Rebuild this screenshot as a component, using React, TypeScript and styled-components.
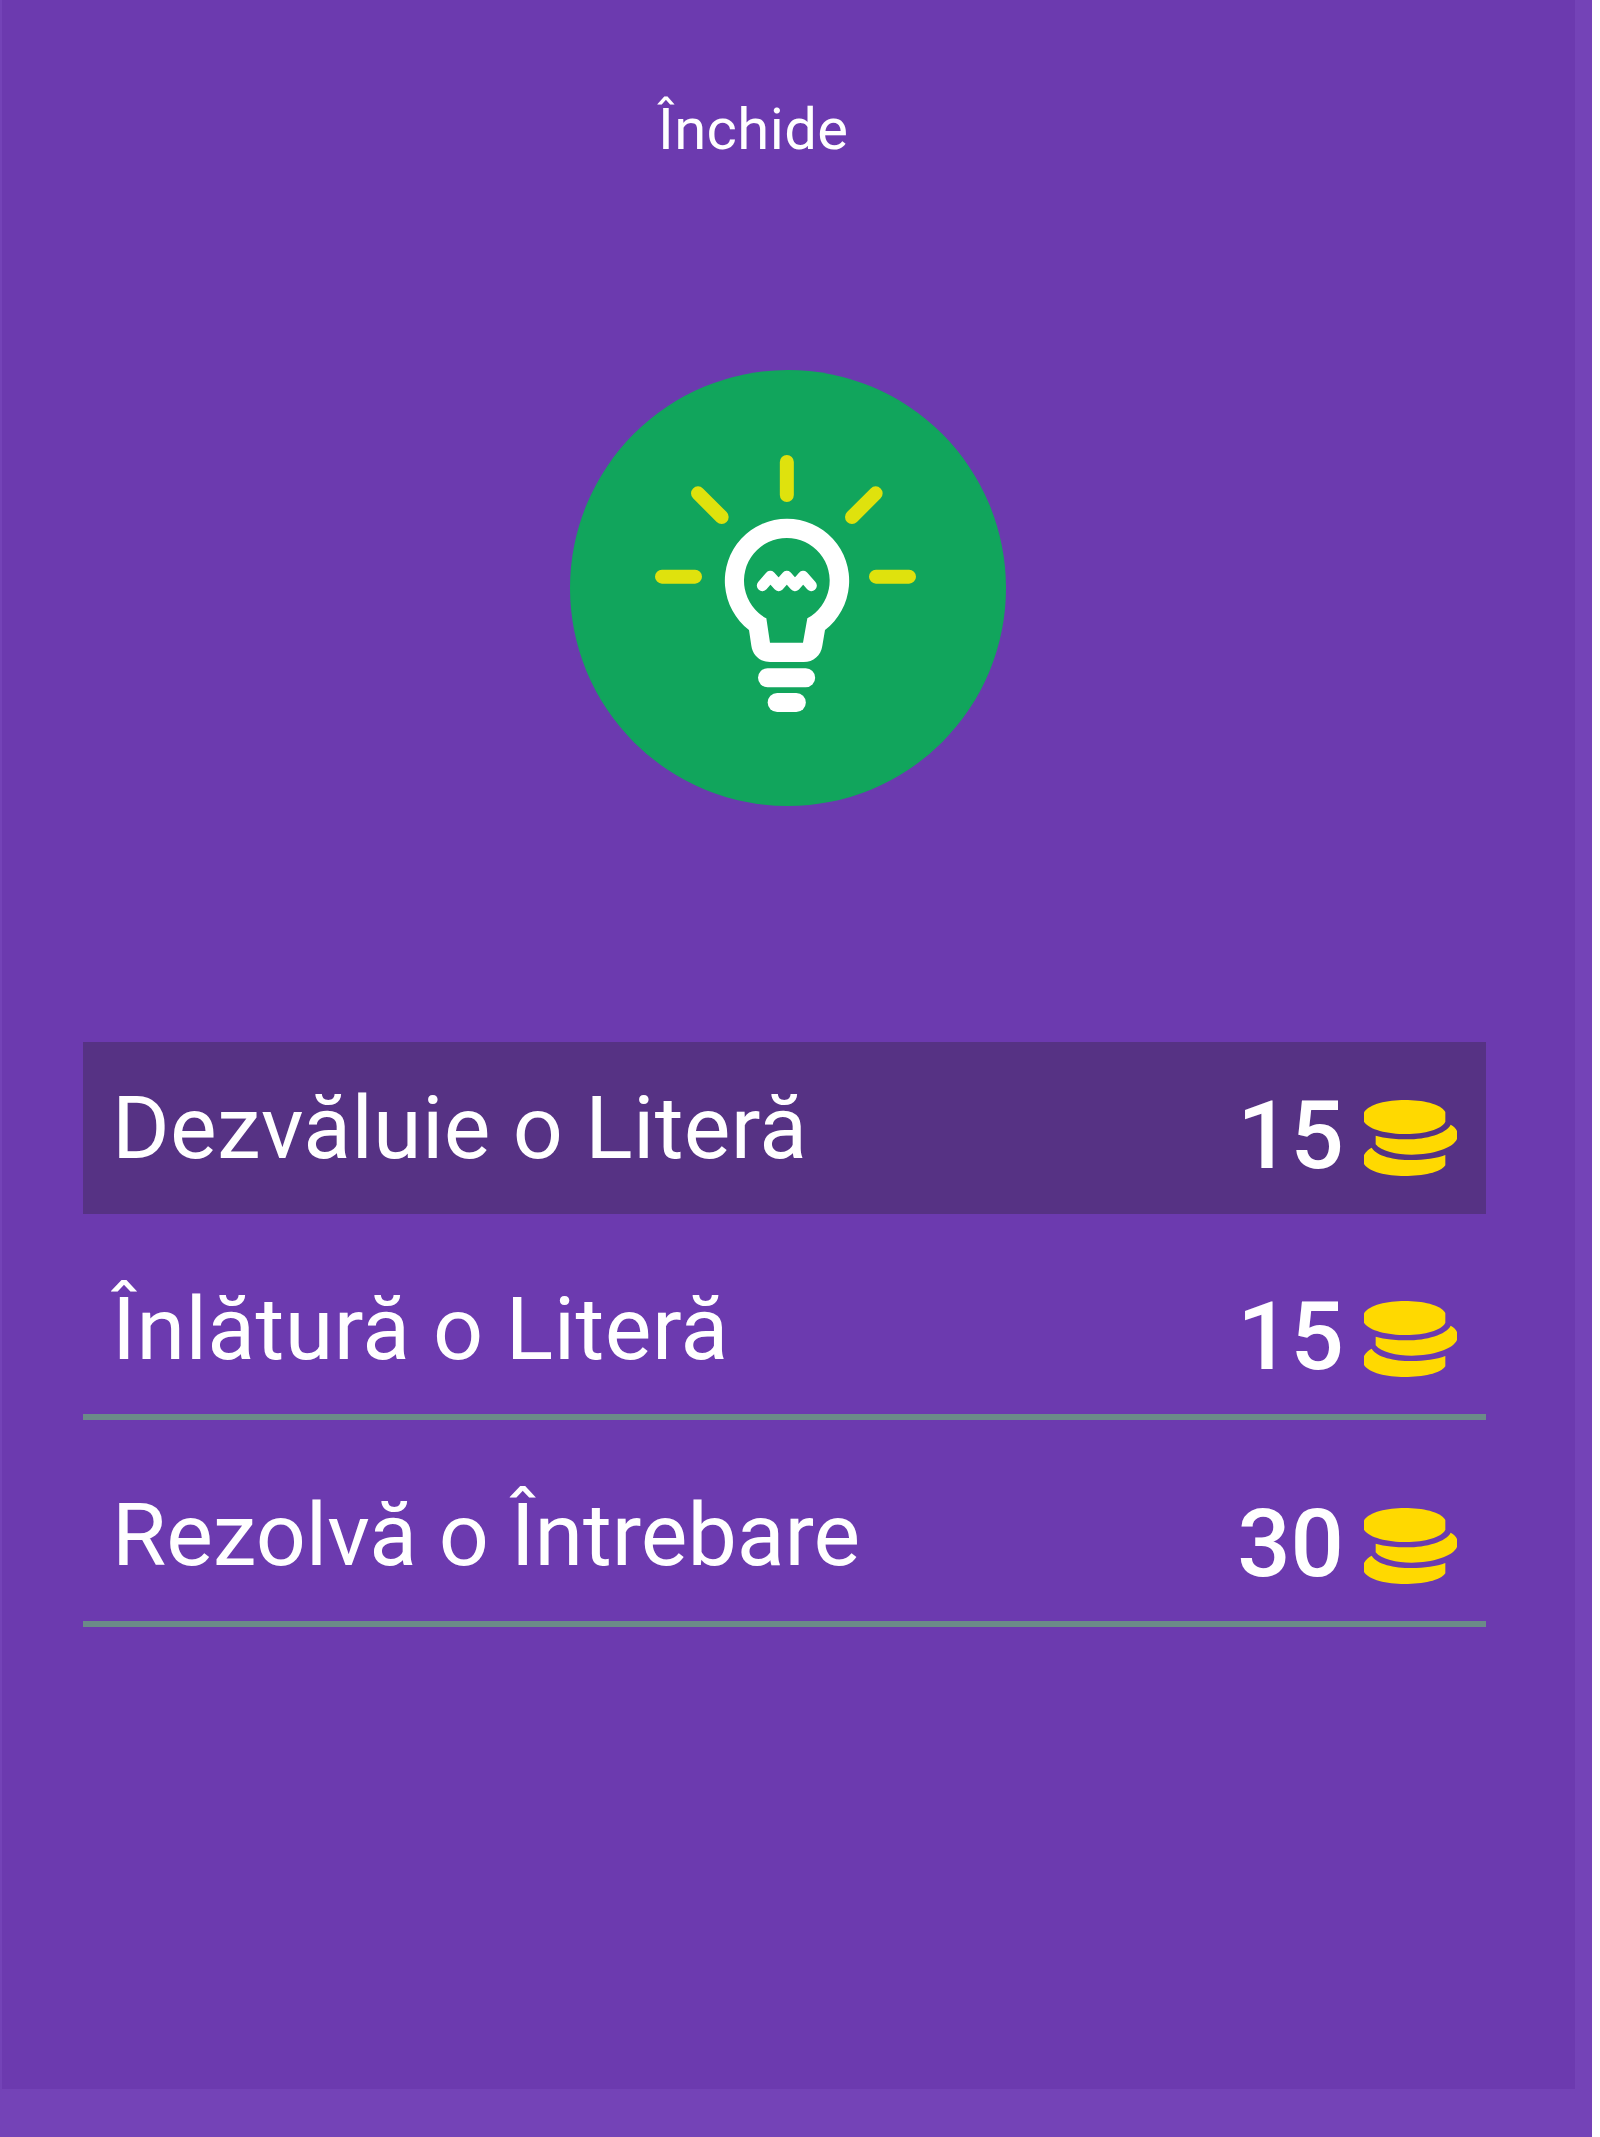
import React from "react";
import styled, { createGlobalStyle } from "styled-components";

const GlobalStyle = createGlobalStyle`
  html, body { margin: 0; padding: 0; background: #ffffff; }
  * { box-sizing: border-box; }
`;

const Page = styled.div`
  width: 1592px;
  height: 2137px;
  padding: 0 17px 48px 2px;
  background: #7443b7;
  font-family: Roboto, "Noto Sans", sans-serif;
  color: #ffffff;
  overflow: hidden;
`;

const Panel = styled.main`
  height: 100%;
  display: flex;
  flex-direction: column;
  align-items: flex-start;
  background: #6c3aaf;
`;

const CloseButton = styled.button`
  margin: 94px 0 0 656px;
  padding: 0;
  border: 0;
  background: none;
  color: inherit;
  font: 400 58px/70px Roboto, "Noto Sans", sans-serif;
  letter-spacing: 0.4px;
  white-space: nowrap;
`;

const Badge = styled.svg`
  display: block;
  width: 436px;
  height: 436px;
  margin: 206px 0 0 568px;
`;

const HintList = styled.ul`
  width: 1403px;
  margin: 236px 0 0 81px;
  padding: 0;
  list-style: none;
  display: flex;
  flex-direction: column;
`;

const Hint = styled.li<{ $active?: boolean }>`
  display: flex;
  justify-content: space-between;
  align-items: flex-start;
  height: ${(p) => (p.$active ? 172 : 177)}px;
  margin-bottom: ${(p) => (p.$active ? 29 : 30)}px;
  padding: 0 29px 0 29px;
  background: ${(p) => (p.$active ? "#563284" : "transparent")};
  border-bottom: ${(p) => (p.$active ? "0" : "6px solid #6b8b88")};
`;

const HintName = styled.span<{ $tracking: number; $top: number }>`
  padding-top: ${(p) => p.$top}px;
  font-size: 88px;
  line-height: 104px;
  letter-spacing: ${(p) => p.$tracking}px;
  white-space: nowrap;
`;

const Price = styled.span`
  display: flex;
  align-items: flex-start;
  gap: 20px;
`;

const Amount = styled.span`
  padding-top: 38px;
  font-size: 94px;
  line-height: 112px;
  font-weight: 500;
`;

const CoinIcon = styled.svg`
  display: block;
  width: 93px;
  height: 76px;
  margin-top: 58px;
`;

const Coins = () => (
  <CoinIcon viewBox="432 210 279 228" fill="#ffd900">
    <path d="M432 247C447 222 502 210 554 210C607 210 661 221 676 246V275C665 298 612 312 560 312C502 312 447 299 432 275Z" />
    <path d="M467 317C495 325 528 328 560 328C620 328 678 311 692 284C701 289 708 295 711 303V327C699 355 636 374 575 374C530 374 483 364 467 343Z" />
    <path d="M455 353C470 379 522 390 575 390C613 390 650 385 676 375V406C662 428 608 438 554 438C500 438 447 426 432 402V375C437 364 446 358 455 353Z" />
  </CoinIcon>
);

const Bulb = () => (
  <Badge viewBox="30 30 1308 1308">
    <circle cx="684" cy="684" r="654" fill="#11a55c" />
    <g stroke="#dfe20d" strokeWidth="42" strokeLinecap="round">
      <path d="M680.5 306V405M306 650H405M948 650H1047M414 400L485 471M947 400L876 471" />
    </g>
    <path
      fill="#ffffff"
      fillRule="evenodd"
      d="M567 810A186.500 186.500 0 1 1 795 810L787 857C783 886 760 906 731 906H630C601 906 578 886 574 857ZM619 775L630 848H729L742 775A128.500 128.500 0 1 0 619 775Z"
    />
    <path
      d="M607 677L631 649L656 677L680.500 649L705 677L729.500 649L754 677"
      fill="none"
      stroke="#ffffff"
      strokeWidth="33"
      strokeLinecap="round"
      strokeLinejoin="round"
    />
    <rect x="594" y="924.500" width="171.500" height="57" rx="28.500" fill="#ffffff" />
    <rect x="623" y="999" width="114.500" height="57" rx="28.500" fill="#ffffff" />
  </Badge>
);

const hints = [
  { name: "Dezvăluie o Literă", cost: 15, active: true, tracking: 0.3, top: 34 },
  { name: "Înlătură o Literă", cost: 15, active: false, tracking: 0.45, top: 34 },
  { name: "Rezolvă o Întrebare", cost: 30, active: false, tracking: -0.05, top: 33 },
];

export default function App() {
  return (
    <>
      <GlobalStyle />
      <Page>
        <Panel>
          <CloseButton>Închide</CloseButton>
          <Bulb />
          <HintList>
            {hints.map((h) => (
              <Hint key={h.name} $active={h.active}>
                <HintName $tracking={h.tracking} $top={h.top}>
                  {h.name}
                </HintName>
                <Price>
                  <Amount>{h.cost}</Amount>
                  <Coins />
                </Price>
              </Hint>
            ))}
          </HintList>
        </Panel>
      </Page>
    </>
  );
}
